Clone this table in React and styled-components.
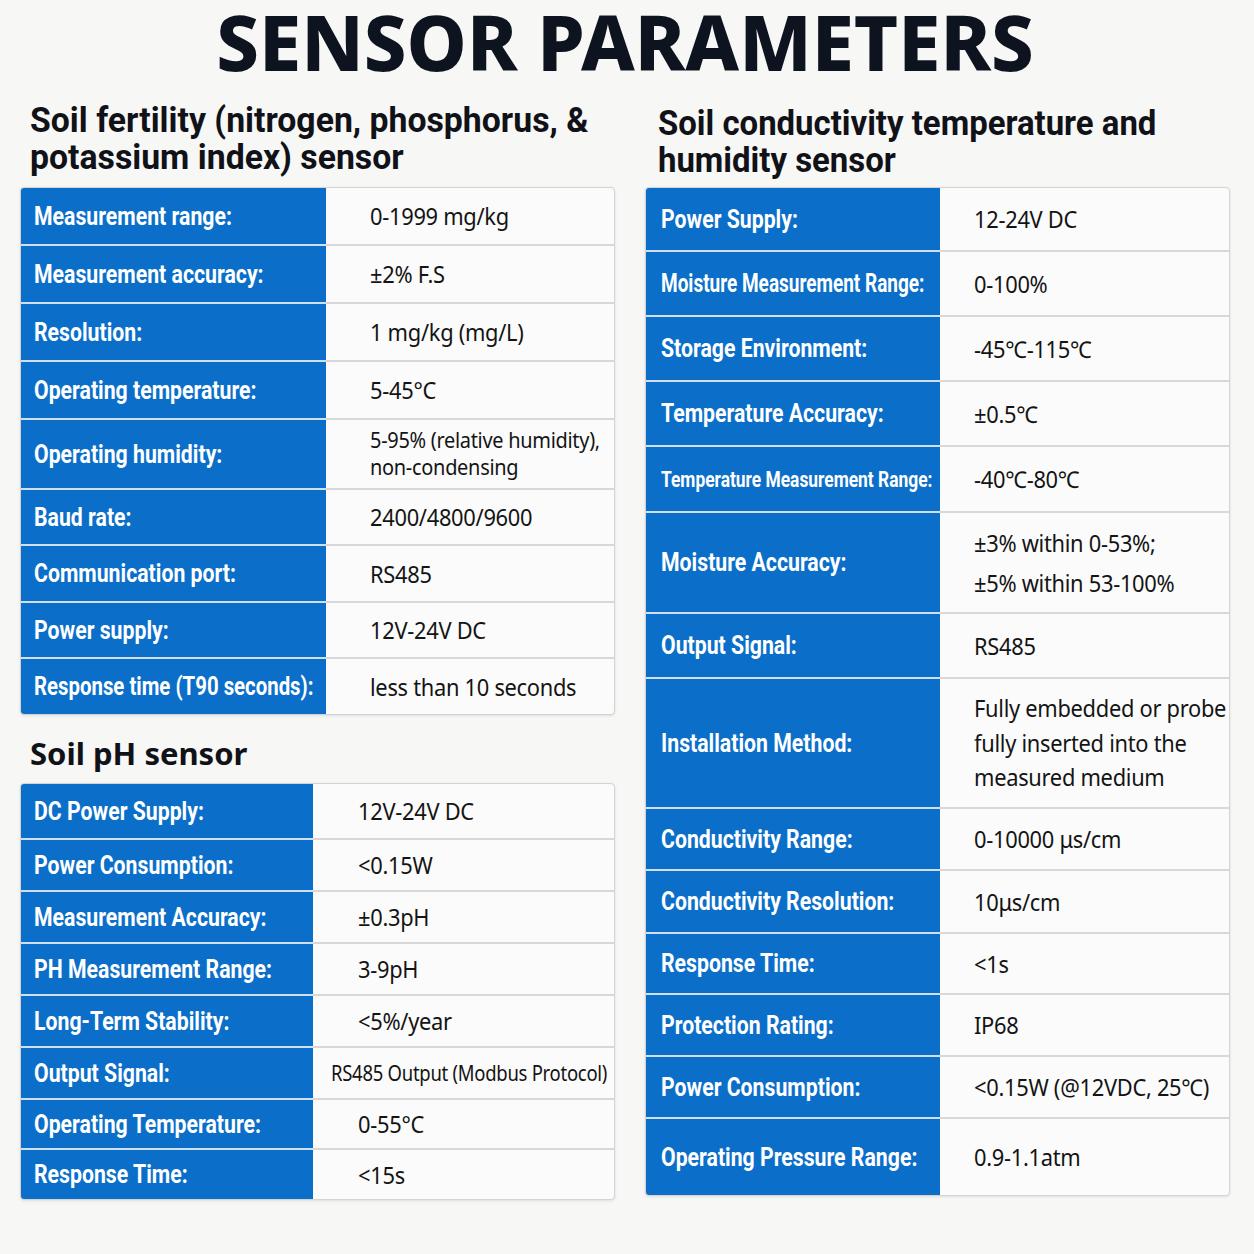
import React from "react";
import styled, { createGlobalStyle } from "styled-components";

const Global = createGlobalStyle`
  html, body { margin: 0; padding: 0; background: #f7f7f6; }
  body { font-family: "Noto Sans", "Liberation Sans", sans-serif; }
`;

const Page = styled.div`
  width: 1254px;
  height: 1254px;
  box-sizing: border-box;
  padding: 0 24px 0 20px;
  background: #f7f7f6;
  overflow: hidden;
`;

const Title = styled.h1`
  margin: 0;
  text-align: center;
  font-family: "Noto Sans", "Liberation Sans", sans-serif;
  font-weight: 800;
  font-size: 76px;
  line-height: 84px;
  color: #0e1320;
`;

const Columns = styled.div`
  display: grid;
  grid-template-columns: 595px 585px;
  column-gap: 30px;
  margin-top: 10px;
`;

const Column = styled.div`
  display: flex;
  flex-direction: column;
`;

const SectionHeading = styled.h2`
  margin: 0 0 0 ${(p) => p.$indent}px;
  box-sizing: border-box;
  height: ${(p) => p.$h}px;
  padding-top: ${(p) => p.$top || 0}px;
  font-family: ${(p) =>
    p.$wide ? `"Noto Sans", "Liberation Sans", sans-serif` : `Roboto, "Liberation Sans", sans-serif`};
  font-weight: 700;
  font-size: ${(p) => p.$size}px;
  line-height: 37px;
  color: #101218;
  white-space: nowrap;
`;

const Squeeze = styled.span`
  display: inline-block;
  transform: scaleX(${(p) => p.$x});
  transform-origin: left center;
  white-space: nowrap;
`;

const Table = styled.div`
  display: flex;
  flex-direction: column;
  border: 1.5px solid #d4d4d4;
  border-radius: 4px;
  overflow: hidden;
  background: #fbfbfb;
  box-shadow: 0 1px 3px rgba(0, 0, 0, 0.1);
`;

const Row = styled.div`
  display: grid;
  grid-template-columns: ${(p) => p.$labelW}px 1fr;
  height: ${(p) => p.$h}px;
`;

const Label = styled.div`
  display: flex;
  align-items: center;
  box-sizing: border-box;
  padding-left: ${(p) => p.$pad}px;
  background: #0b6fca;
  color: #ffffff;
  font-family: Roboto, "Liberation Sans", sans-serif;
  font-weight: 700;
  font-size: ${(p) => p.$size || 25}px;
  border-top: ${(p) => (p.$first ? "none" : "2px solid #cfe0f1")};
  white-space: nowrap;
  overflow: hidden;
`;

const Value = styled.div`
  display: flex;
  flex-direction: column;
  justify-content: center;
  align-items: flex-start;
  box-sizing: border-box;
  padding-left: ${(p) => p.$pad}px;
  color: #141414;
  font-family: "Noto Sans", "Liberation Sans", sans-serif;
  font-size: ${(p) => p.$size || 23}px;
  line-height: ${(p) => p.$lh || 30}px;
  letter-spacing: -0.3px;
  border-top: ${(p) => (p.$first ? "none" : "2px solid #d8d8d8")};
  white-space: nowrap;
`;

const fertility = [
  { l: "Measurement range:", v: ["0-1999 mg/kg"], h: 56 },
  { l: "Measurement accuracy:", v: ["±2% F.S"], h: 58 },
  { l: "Resolution:", v: ["1 mg/kg (mg/L)"], h: 58 },
  { l: "Operating temperature:", v: ["5-45°C"], h: 58 },
  { l: "Operating humidity:", v: ["5-95% (relative humidity),", "non-condensing"], h: 70, vs: 21, lh: 27 },
  { l: "Baud rate:", v: ["2400/4800/9600"], h: 56 },
  { l: "Communication port:", v: ["RS485"], h: 57 },
  { l: "Power supply:", v: ["12V-24V DC"], h: 56 },
  { l: "Response time (T90 seconds):", v: ["less than 10 seconds"], h: 57, sx: 0.815 },
];

const ph = [
  { l: "DC Power Supply:", v: ["12V-24V DC"], h: 54 },
  { l: "Power Consumption:", v: ["<0.15W"], h: 52 },
  { l: "Measurement Accuracy:", v: ["±0.3pH"], h: 52 },
  { l: "PH Measurement Range:", v: ["3-9pH"], h: 52 },
  { l: "Long-Term Stability:", v: ["<5%/year"], h: 52 },
  { l: "Output Signal:", v: ["RS485 Output (Modbus Protocol)"], h: 52, vs: 21, pad: 18, vx: 0.88 },
  { l: "Operating Temperature:", v: ["0-55°C"], h: 50 },
  { l: "Response Time:", v: ["<15s"], h: 51 },
];

const conductivity = [
  { l: "Power Supply:", v: ["12-24V DC"], h: 62 },
  { l: "Moisture Measurement Range:", v: ["0-100%"], h: 65, sx: 0.76 },
  { l: "Storage Environment:", v: ["-45℃-115℃"], h: 65 },
  { l: "Temperature Accuracy:", v: ["±0.5℃"], h: 65 },
  { l: "Temperature Measurement Range:", v: ["-40℃-80℃"], h: 66, ls: 22, sx: 0.79 },
  { l: "Moisture Accuracy:", v: ["±3% within 0-53%;", "±5% within 53-100%"], h: 101, lh: 40 },
  { l: "Output Signal:", v: ["RS485"], h: 65 },
  { l: "Installation Method:", v: ["Fully embedded or probe", "fully inserted into the", "measured medium"], h: 130, lh: 34.5 },
  { l: "Conductivity Range:", v: ["0-10000 μs/cm"], h: 62 },
  { l: "Conductivity Resolution:", v: ["10μs/cm"], h: 63 },
  { l: "Response Time:", v: ["<1s"], h: 61 },
  { l: "Protection Rating:", v: ["IP68"], h: 62 },
  { l: "Power Consumption:", v: ["<0.15W (@12VDC, 25℃)"], h: 62 },
  { l: "Operating Pressure Range:", v: ["0.9-1.1atm"], h: 78 },
];

function SpecTable({ rows, labelW, labelPad, valuePad }) {
  return (
    <Table>
      {rows.map((r, i) => (
        <Row key={r.l} $labelW={labelW} $h={r.h}>
          <Label $first={i === 0} $pad={labelPad} $size={r.ls}>
            <Squeeze $x={r.sx || 0.85}>{r.l}</Squeeze>
          </Label>
          <Value $first={i === 0} $pad={r.pad || valuePad} $size={r.vs} $lh={r.lh}>
            {r.v.map((line) => (
              <Squeeze key={line} $x={r.vx || 0.95}>
                {line}
              </Squeeze>
            ))}
          </Value>
        </Row>
      ))}
    </Table>
  );
}

const Spacer = styled.div`
  height: ${(p) => p.$h}px;
`;

export default function App() {
  return (
    <Page>
      <Global />
      <Title>SENSOR PARAMETERS</Title>
      <Columns>
        <Column>
          <SectionHeading $indent={10} $h={93} $top={8} $size={35}>
            <Squeeze $x={0.965}>Soil fertility (nitrogen, phosphorus, &amp;</Squeeze>
            <br />
            <Squeeze $x={0.965}>potassium index) sensor</Squeeze>
          </SectionHeading>
          <SpecTable rows={fertility} labelW={305} labelPad={13} valuePad={44} />
          <Spacer $h={20} />
          <SectionHeading $indent={10} $h={48} $size={31} $wide>
            Soil pH sensor
          </SectionHeading>
          <SpecTable rows={ph} labelW={292} labelPad={13} valuePad={45} />
        </Column>
        <Column>
          <SectionHeading $indent={13} $h={93} $top={11} $size={35}>
            <Squeeze $x={0.94}>Soil conductivity temperature and</Squeeze>
            <br />
            <Squeeze $x={0.94}>humidity sensor</Squeeze>
          </SectionHeading>
          <SpecTable rows={conductivity} labelW={294} labelPad={15} valuePad={34} />
        </Column>
      </Columns>
    </Page>
  );
}
